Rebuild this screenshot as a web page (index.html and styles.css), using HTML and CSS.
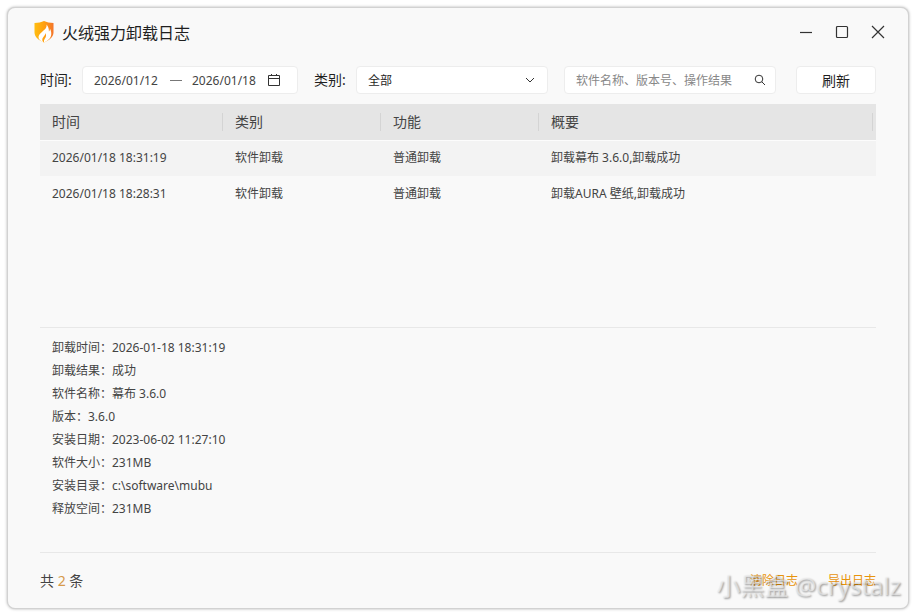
FILE: index.html
```html
<!DOCTYPE html>
<html lang="zh-CN">
  <head>
    <meta charset="UTF-8" />
    <meta name="viewport" content="width=device-width, initial-scale=1.0" />
    <title>火绒强力卸载日志</title>
    <link rel="stylesheet" href="styles.css" />
  </head>
  <body>
    <div class="window">
      <header class="titlebar">
        <svg class="logo" viewBox="0 0 20 22">
          <defs>
            <linearGradient id="shield" x1="0" y1="0" x2="1" y2="0">
              <stop offset="0" stop-color="#ffbe10" />
              <stop offset="0.5" stop-color="#ffa010" />
              <stop offset="1" stop-color="#f4752c" />
            </linearGradient>
          </defs>
          <path
            d="M10 0C12.500 1.300 16 2 19.500 2v9.500c0 4.500-4 7.500-9.500 10C4.500 19 .5 16 .5 11.500V2c3.500 0 7-.7 9.500-2z"
            fill="url(#shield)"
          />
          <path
            d="M12.500 3.500c.5 3.200-1.400 4.800-4.300 7.200C5.300 13 4 15 4.700 17.500c1 1.700 2.800 3.200 4.600 4.100-1.400-2.200-1.400-4 .1-5.700 1.200-1.300 2-2.200 1.900-3.900 1.300 1.900.9 3.800-.4 5.600-.8 1.200-1.100 2.400-.9 4 3.400-1.600 5.900-3.500 6.900-6.300.9-2.700.2-5.700-1-7.800.1 1.300-.3 2.300-1 3C15 8.500 14.500 5.500 12.500 3.500z"
            fill="#fff"
          />
        </svg>
        <h1 class="title">火绒强力卸载日志</h1>
        <div class="window-buttons">
          <button class="window-button" aria-label="最小化">
            <svg viewBox="0 0 14 14"><path d="M1 7.500h12" /></svg>
          </button>
          <button class="window-button" aria-label="最大化">
            <svg viewBox="0 0 14 14"><rect x="1.500" y="1.500" width="11" height="11" rx="1" /></svg>
          </button>
          <button class="window-button" aria-label="关闭">
            <svg viewBox="0 0 14 14"><path d="M1 1l12 12M13 1L1 13" /></svg>
          </button>
        </div>
      </header>

      <form class="filters">
        <label class="filter-label" for="date-from">时间:</label>
        <div class="box date-range">
          <input class="date" type="text" id="date-from" value="2026/01/12" />
          <span class="dash"></span>
          <input class="date" type="text" id="date-to" aria-label="结束日期" value="2026/01/18" />
          <svg class="calendar" viewBox="0 0 14 14">
            <path d="M1.500 2.500h11v10h-11zM1.500 5.500h11M4.500 1v2M9.500 1v2" />
          </svg>
        </div>
        <label class="filter-label" for="category">类别:</label>
        <div class="box category">
          <select id="category">
            <option>全部</option>
          </select>
          <svg class="chevron" viewBox="0 0 10 10"><path d="M1 3l4 4 4-4" /></svg>
        </div>
        <div class="box search">
          <input type="text" aria-label="搜索" placeholder="软件名称、版本号、操作结果" />
          <button class="search-button" type="button" aria-label="搜索">
            <svg viewBox="0 0 12 12"><circle cx="5" cy="5" r="3.800" /><path d="M7.800 7.800L11 11" /></svg>
          </button>
        </div>
        <button class="box refresh" type="button">刷新</button>
      </form>

      <div class="list">
        <table class="log-table">
          <colgroup>
            <col class="col-time" />
            <col class="col-kind" />
            <col class="col-kind" />
            <col />
          </colgroup>
          <thead>
            <tr>
              <th><span>时间</span></th>
              <th><span>类别</span></th>
              <th><span>功能</span></th>
              <th><span>概要</span></th>
            </tr>
          </thead>
          <tbody>
            <tr class="selected">
              <td>2026/01/18 18:31:19</td>
              <td>软件卸载</td>
              <td>普通卸载</td>
              <td>卸载幕布 3.6.0,卸载成功</td>
            </tr>
            <tr>
              <td>2026/01/18 18:28:31</td>
              <td>软件卸载</td>
              <td>普通卸载</td>
              <td>卸载AURA 壁纸,卸载成功</td>
            </tr>
          </tbody>
        </table>
      </div>

      <div class="details">
        <p>卸载时间：2026-01-18 18:31:19</p>
        <p>卸载结果：成功</p>
        <p>软件名称：幕布 3.6.0</p>
        <p>版本：3.6.0</p>
        <p>安装日期：2023-06-02 11:27:10</p>
        <p>软件大小：231MB</p>
        <p>安装目录：c:\software\mubu</p>
        <p>释放空间：231MB</p>
      </div>

      <footer class="footer">
        <span class="total">共 <span class="count">2</span> 条</span>
        <nav class="actions">
          <a href="#">清除日志</a>
          <a href="#">导出日志</a>
        </nav>
      </footer>

      <div class="watermark">小黑盒 @crystalz</div>
    </div>
  </body>
</html>
```

FILE: styles.css
```css
* {
  box-sizing: border-box;
}
body {
  margin: 0;
  padding: 8px;
  background-color: #fff;
  font-family: "Noto Sans", "Noto Sans CJK SC", sans-serif;
  font-size: 12px;
  color: #444;
}
button,
input,
select {
  font-family: inherit;
  font-size: 12px;
  color: inherit;
}
svg {
  display: block;
  fill: none;
  stroke: #333;
}
.window {
  position: relative;
  display: flex;
  flex-direction: column;
  min-height: calc(100vh - 16px);
  padding: 0 32px;
  background-color: #f9f9f9;
  border-radius: 7px;
  box-shadow: 0 0 0 1px #d2d2d2, 0 0 3px 1px rgba(0, 0, 0, 0.3);
}

/* Title bar */
.titlebar {
  display: flex;
  align-items: center;
  height: 48px;
  margin: 0 -20px 0 -6px;
  padding-bottom: 1px;
}
.logo {
  width: 20px;
  height: 22px;
  stroke: none;
}
.title {
  flex: 1;
  margin: 0 0 0 8px;
  font-size: 16px;
  font-weight: 400;
  color: #1f1f1f;
}
.window-buttons {
  display: flex;
}
.window-button {
  width: 36px;
  height: 32px;
  padding: 0 11px;
  border: none;
  background: none;
}
.window-button svg {
  width: 14px;
  height: 14px;
  stroke-width: 1.2;
}

/* Filters */
.filters {
  display: flex;
  align-items: center;
  margin-top: 10px;
}
.filter-label {
  width: 42px;
  font-size: 14px;
  line-height: 28px;
  color: #1f1f1f;
}
.box {
  display: flex;
  align-items: center;
  height: 28px;
  background-color: #fff;
  border: 1px solid #ededed;
  border-radius: 4px;
}
.box input,
.box select {
  min-width: 0;
  padding: 0;
  border: none;
  outline: none;
  background: none;
}
.date-range {
  width: 216px;
  margin-right: 16px;
  padding-left: 11px;
}
.date-range .date {
  width: 68px;
}
.dash {
  width: 12px;
  height: 1px;
  margin: 0 10px 0 8px;
  background-color: #777;
}
.calendar {
  width: 14px;
  height: 14px;
  margin-left: 7px;
}
.category {
  position: relative;
  flex: 1 1 192px;
}
.category select {
  width: 100%;
  height: 26px;
  padding: 0 32px 0 11px;
  appearance: none;
  color: #1f1f1f;
}
.chevron {
  position: absolute;
  right: 12px;
  width: 10px;
  height: 10px;
  pointer-events: none;
}
.search {
  flex: 1 1 212px;
  margin: 0 20px 0 16px;
  padding: 0 9px 0 11px;
}
.search input {
  flex: 1;
}
.search input::placeholder {
  color: #888;
}
.search-button {
  padding: 0;
  border: none;
  background: none;
}
.search-button svg {
  width: 12px;
  height: 12px;
}
.refresh {
  justify-content: center;
  width: 80px;
  font-size: 14px;
  color: #1f1f1f;
}

/* Log list */
.list {
  flex: 1;
  padding: 10px 0;
}
.log-table {
  width: 100%;
  table-layout: fixed;
  border-collapse: collapse;
}
.col-time {
  width: 183px;
}
.col-kind {
  width: 158px;
}
.log-table th {
  height: 36px;
  padding: 0;
  background-color: #e5e5e5;
  border-bottom: 1px solid #fcfcfc;
  font-size: 14px;
  font-weight: 400;
  text-align: left;
}
.log-table th span {
  display: block;
  padding-left: 12px;
  border-right: 1px solid #d4d4d4;
  line-height: 18px;
}
.log-table th:last-child {
  padding-right: 3px;
}
.log-table td {
  height: 36px;
  padding: 0 12px 2px;
}
.log-table .selected {
  background-color: #f3f3f3;
}

/* Details */
.details {
  padding: 8px 12px 32px;
  border-top: 1px solid #e8e8e8;
  border-bottom: 1px solid #e8e8e8;
}
.details p {
  margin: 0;
  line-height: 23px;
}

/* Footer */
.footer {
  display: flex;
  align-items: center;
  justify-content: space-between;
  height: 55px;
  padding-bottom: 2px;
}
.total {
  font-size: 14px;
}
.count {
  color: #d69a4a;
}
.actions {
  display: flex;
  gap: 30px;
}
.actions a {
  color: #e8940c;
  text-decoration: none;
}
.watermark {
  position: absolute;
  right: 7px;
  bottom: 4px;
  font-size: 24px;
  line-height: 36px;
  color: rgba(240, 240, 240, 0.6);
  text-shadow: 1px 1px 2px rgba(0, 0, 0, 0.4);
  pointer-events: none;
}
```
